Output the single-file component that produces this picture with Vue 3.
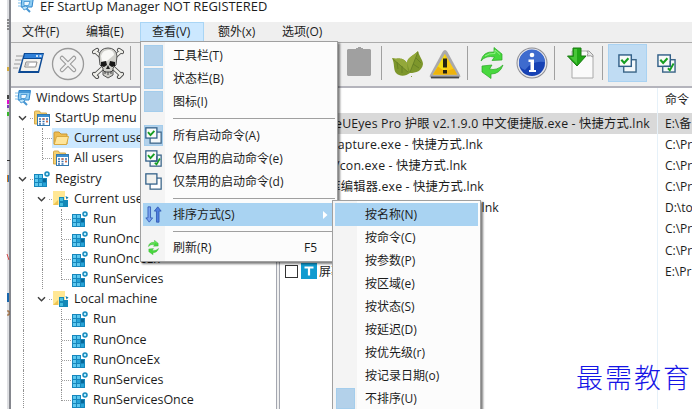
<template>
  <div class="screen">
    <svg class="desktop-strip" width="11" height="409" viewBox="0 0 11 409">
      <rect width="7" height="409" fill="#fff" />
      <rect x="7" width="2" height="409" fill="#dedfe2" />
      <rect x="9" width="2" height="409" fill="#85878e" />
      <path d="M7 20h2M7 23h2M7 26h2M7 29h2" stroke="#333" />
      <rect x="7" y="67" width="2" height="4" fill="#d7ad3d" />
      <rect x="7" y="95" width="2" height="4" fill="#444" />
      <rect x="7" y="100" width="2" height="4" fill="#e20bd0" />
      <rect x="7" y="105" width="2" height="3" fill="#7d40b8" />
      <rect x="7" y="112" width="2" height="4" fill="#38b72c" />
      <rect x="7" y="160" width="3" height="1" fill="#333" />
      <rect x="7" y="175" width="1" height="7" fill="#d27b1c" />
      <rect x="8" y="175" width="1" height="7" fill="#3474b7" />
      <path d="M7 254l2 6" stroke="#d64848" />
      <rect x="7" y="293" width="2" height="9" fill="#1766ad" />
      <path d="M7 311h2v4h-2" stroke="#96581f" fill="none" />
    </svg>

    <div class="window">
      <header class="title-bar">
        <svg class="icon16" viewBox="0 0 16 16"><use href="#i-app" /></svg>
        <span>EF StartUp Manager NOT REGISTERED</span>
      </header>

      <nav class="menu-bar">
        <span v-for="m in menus" :key="m" class="menu-name" :class="{ open: m === '查看(V)' }">{{ m }}</span>
      </nav>

      <div class="toolbar">
        <svg class="tool launch" width="32" height="32" viewBox="0 0 32 32">
          <path d="M3 9h7M2 13h7M1 17h6M0 21h5" stroke="#999" />
          <path d="M11 6h20l-5 20H5z" fill="#0d4a94" />
          <path d="M12 7h18l-1 4H11z" fill="#2f80d8" />
          <path d="M10.500 12h17.500l-3 12H7.500z" fill="#f3f2ed" />
          <path d="M13 15h11l-1.300 5H11.700z" fill="#fff" stroke="#888" />
          <path d="M13.500 16h3l-.800 3h-3z" fill="#c8c8c8" />
          <path d="M23 9h2M26.500 9h2" stroke="#fff" stroke-width="1.600" />
        </svg>
        <svg class="tool stop" width="34" height="34" viewBox="0 0 34 34">
          <circle cx="17" cy="17" r="15.500" fill="#f1f1f1" stroke="#999" stroke-width="1.300" />
          <path d="M11 11l12 12M23 11l-12 12" stroke="#999" stroke-width="4.500" stroke-linecap="round" />
          <path d="M11 11l12 12M23 11l-12 12" stroke="#f1f1f1" stroke-width="2.400" stroke-linecap="round" />
        </svg>
        <svg class="tool skull" width="32" height="32" viewBox="0 0 32 32">
          <g stroke-linecap="round">
            <path d="M4 5l24 22M28 5L4 27M2 5l3-2M27 3l3 2M2 27l3 3M27 30l3-3" stroke="#4a4a4a" stroke-width="4.200" />
            <path d="M4 5l24 22M28 5L4 27M2 5l3-2M27 3l3 2M2 27l3 3M27 30l3-3" stroke="#efefea" stroke-width="2.400" />
          </g>
          <path d="M7 9Q8 1 16 1t9 8l-1 9-3 3v7l-5 3-5-3v-7l-3-3z" fill="#cfcfca" stroke="#555" />
          <path d="M9 9q2-7 9-6 4 1 4 5l-7 6-5 1z" fill="#f8f8f6" />
          <path d="M9 15l5-1 1 4-3 2-3-1zM23 15l-5-1-1 4 3 2 3-1z" fill="#171717" />
          <path d="M16 18l-2 4h4z" fill="#222" />
          <path d="M11 23l2 2h6l2-2M13 24v3M16 25v3M19 24v3" stroke="#444" fill="none" />
        </svg>
        <i class="divider d1"></i>
        <svg class="tool clipboard" width="24" height="31" viewBox="0 0 24 31">
          <path d="M1 2h8V1h2V0h3v1h2v1h7l1 1v25l-1 1H1l-1-1V3z" fill="#a0a0a0" />
        </svg>
        <i class="divider d2"></i>
        <svg class="tool leaves" width="34" height="30" viewBox="0 0 34 30">
          <path d="M1 8c5 2 10-2 15 5 1-6 6-7 11-12 1 5 5 9 5 13-1 7-7 9-13 9-4 3-10 4-14 0-3-4-1-9-4-15z" fill="#7d962b" />
          <path d="M1 8c5 2 10-2 15 5l1 9zM27 1c-5 5-11 6-11 12l3 9z" fill="#93a83a" />
          <path d="M2 9l15 13M27 2l-8 20M6 12l1 7M11 16v7M25 8l5 5M22 14l6 4" stroke="#5f7822" stroke-width=".7" />
          <path d="M20 26l1 1" stroke="#8ba13b" />
        </svg>
        <svg class="tool warn" width="32" height="32" viewBox="0 0 32 32">
          <path d="M13.500 3q2.500-4 5 0l12.500 23q1 3-2 3H3q-3 0-2-3z" fill="#aaa9ac" />
          <path d="M2 28.500h28" stroke="#424448" stroke-width="1.800" />
          <path d="M16 5L28 25.500H4z" fill="#f9c915" />
          <path d="M16 5v20.500H4z" fill="#f4de17" />
          <path d="M4 25.500l5-8 7 5 9-3 3 6z" fill="#eeb20c" />
          <path d="M16 9.500v9M16 21v3.500" stroke="#252313" stroke-width="4" />
        </svg>
        <i class="divider d3"></i>
        <svg class="tool refresh" width="24" height="32" viewBox="0 0 24 32"><use href="#i-refresh" /></svg>
        <svg class="tool info" width="32" height="32" viewBox="0 0 32 32">
          <circle cx="16" cy="16" r="15.500" fill="#8d8d92" />
          <circle cx="16" cy="16" r="14.500" fill="#e4e6ed" />
          <circle cx="16" cy="16" r="13" fill="#1742b4" />
          <path d="M3 16a13 13 0 0 1 26-1q-13-2-20 8-6-2-6-7z" fill="#3e6bce" />
          <circle cx="16" cy="8" r="2.300" fill="#fff" />
          <path d="M12.500 12.500H18V23h2v2h-7v-2h1.500v-8h-2z" fill="#fff" />
        </svg>
        <i class="divider d4"></i>
        <svg class="tool import" width="28" height="32" viewBox="0 0 28 32">
          <path d="M5 4h15l6 6v21H5z" fill="#fafafa" stroke="#aaa" />
          <path d="M20 4q2 2 0 5 4-1 6 1V8l-4-4z" fill="#e6e6e6" stroke="#999" />
          <path d="M6 1h8v8h5l-9 10L.500 9H6z" fill="#20a716" stroke="#187a11" />
          <path d="M7 2h3v15L3 10h4z" fill="#48c639" />
        </svg>
        <i class="divider d5"></i>
        <span class="tool-active"><svg width="19" height="19" viewBox="0 0 20 20"><use href="#i-all" /></svg></span>
        <svg class="tool enabled" width="19" height="19" viewBox="0 0 20 20"><use href="#i-enabled" /></svg>
      </div>

      <main class="content">
        <section class="tree">
          <div v-for="(n, i) in nodes" :key="i" class="node">
            <span v-for="(c, k) in n.cells" :key="k" class="cell" :class="'cell-' + c">
              <svg v-if="c === 'chevron'" class="chevron" width="9" height="7" viewBox="0 0 9 7">
                <path d="M1 1.200l3.500 3.500L8 1.200" fill="none" stroke="#404040" stroke-width="1.500" />
              </svg>
            </span>
            <span class="node-body" :class="{ selected: n.selected }">
              <svg class="icon16" viewBox="0 0 16 16"><use :href="'#i-' + n.icon" /></svg>
              <span class="node-text">{{ n.text }}</span>
            </span>
          </div>
        </section>
        <div class="splitter"></div>
        <section class="list">
          <div class="list-head">
            <span class="name-col"></span>
            <span class="cmd-col">命令</span>
          </div>
          <div v-for="(r, i) in rows" :key="i" class="list-row" :class="{ selected: i === 0 }">
            <span class="name-col">
              <template v-if="r.end">
                <span class="name-right" :style="{ width: r.end + 'px' }">{{ r.name }}</span>
              </template>
              <template v-else>
                <i class="check"></i>
                <svg width="16" height="16" viewBox="0 0 16 16">
                  <rect width="16" height="16" fill="#109bd0" />
                  <path d="M3.500 4.500h9M8 4v8.500" stroke="#fff" stroke-width="2.200" />
                </svg>
                <span class="name-left">{{ r.name }}</span>
              </template>
            </span>
            <span class="cmd-col">{{ r.cmd }}</span>
          </div>
          <div class="list-rest"><span class="name-col"></span><span class="cmd-col"></span></div>
        </section>
      </main>
    </div>

    <div class="popup view-menu">
      <template v-for="(it, i) in viewItems" :key="i">
        <div v-if="it.sep" class="sep" :class="{ tall: i === 3 }"></div>
        <div v-else class="item" :class="{ hot: it.sub }">
          <span class="mark" :class="{ checked: it.checked }">
            <svg v-if="it.icon" :class="'mark-' + it.icon" width="17" height="17" viewBox="0 0 20 20"><use :href="'#i-' + it.icon" /></svg>
          </span>
          <span class="label">{{ it.text }}</span>
          <span v-if="it.key" class="key">{{ it.key }}</span>
          <svg v-if="it.sub" class="arrow" width="5" height="8" viewBox="0 0 5 8"><path d="M0 0l4.500 4L0 8z" fill="#fff" /></svg>
        </div>
      </template>
    </div>

    <div class="popup sort-menu">
      <div v-for="(t, i) in sortItems" :key="t" class="item" :class="{ hot: i === 0 }">
        <span class="mark" :class="{ checked: i === 8 }"></span>
        <span class="label">{{ t }}</span>
      </div>
    </div>

    <div class="watermark">最需教育</div>

    <svg class="defs" width="0" height="0">
      <symbol id="i-app" viewBox="0 0 16 16">
        <path d="M4 .500h11.500l-1.500 9.500H3z" fill="#8fcdf2" stroke="#2f86cc" />
        <path d="M4 2h11" stroke="#2f86cc" stroke-width="1.500" />
        <path d="M0 3h3M0 6h3M0 9h2" stroke="#7dbce6" />
        <path d="M6 4.500h6l-1.500 4H6z" fill="#eef9ff" stroke="#3b8fd0" stroke-width=".8" />
        <path d="M4 10l4-1 2 2-4 2z" fill="#bfe4f8" stroke="#3b8fd0" stroke-width=".8" />
        <path d="M8.500 11.500l3.500 3.500" stroke="#4796d2" stroke-width="2" />
      </symbol>
      <symbol id="i-group" viewBox="0 0 16 16">
        <path d="M.500 2q0-1 1-1h4l1 2h6v11H.500z" fill="#f3cf70" stroke="#d3a94c" />
        <rect x="3.500" y="4.500" width="12" height="11" fill="#fff" stroke="#3578ae" />
        <path d="M4 6h11" stroke="#3d91d1" stroke-width="2" />
        <path d="M5 9h2M8.500 9h2M12 9h2M5 11.500h2M8.500 11.500h2M12 11.500h2M5 14h2M8.500 14h2" stroke="#3770ae" stroke-width="1.600" />
        <path d="M8.500 9h2M12 11.500h2" stroke="#d76a42" stroke-width="1.600" />
      </symbol>
      <symbol id="i-folder" viewBox="0 0 16 16">
        <path d="M1 3q0-1 1-1h4l2 2h6v10H1z" fill="#eebc50" stroke="#c99735" />
        <path d="M3.500 6.500h12l-2 8H1.200z" fill="#ffe59a" stroke="#d9a93f" />
      </symbol>
      <symbol id="i-reg" viewBox="0 0 16 16">
        <path d="M0 3h9v4h4v9H0z" fill="#1687bd" />
        <path d="M1 4h3v3H1zM5 4h3v3H5zM1 8h3v3H1zM1 12h3v3H1zM5 12h3v3H5z" fill="#5dc7ee" />
        <path d="M5 8h3v3H5zM9 12h3v3H9z" fill="#27a4d7" />
        <path d="M9 8h3v3H9z" fill="#086797" />
        <circle cx="13" cy="3" r="2" fill="#b8ecff" stroke="#168abe" stroke-width="1.500" />
      </symbol>
      <symbol id="i-regfolder" viewBox="0 0 16 16">
        <path d="M0 0h12v14H0z" fill="#ffe794" />
        <path d="M0 14l5-5v5z" fill="#efc553" />
        <path d="M6 6h5v3h4v7H6z" fill="#1489b8" />
        <path d="M7 7h3v3H7zM7 12h3v3H7z" fill="#48bddd" />
        <path d="M12.500 5l3 1.500-2 2z" fill="#137ca9" />
      </symbol>
      <symbol id="i-all" viewBox="0 0 20 20">
        <rect x="6" y="6" width="13" height="13" fill="#f4f8fa" stroke="#3c6689" stroke-width="1.500" />
        <rect x="1" y="1" width="13" height="12" fill="#f9faf9" stroke="#315f88" stroke-width="1.500" />
        <path d="M3.500 6l3 3.500L11 4.500" fill="none" stroke="#169e22" stroke-width="2.200" />
      </symbol>
      <symbol id="i-enabled" viewBox="0 0 20 20">
        <use href="#i-all" />
        <path d="M11.500 15l2 2 4-7" fill="none" stroke="#169e22" stroke-width="2" />
        <path d="M14 7v6H7" fill="none" stroke="#315f88" stroke-width="1.500" />
      </symbol>
      <symbol id="i-disabled" viewBox="0 0 20 20">
        <rect x="6" y="6" width="13" height="13" fill="#fff" stroke="#3c6689" stroke-width="1.500" />
        <rect x="1" y="1" width="13" height="12" fill="#f1f1ee" stroke="#315f88" stroke-width="1.500" />
      </symbol>
      <symbol id="i-sort" viewBox="0 0 20 20">
        <path d="M3.500 1h3v13h2.500L5 19 1 14h2.500z" fill="#7ba2ee" stroke="#3059b5" />
        <path d="M13.500 19h3V6H19l-4-5-4 5h2.500z" fill="#4f7fdd" stroke="#3059b5" />
      </symbol>
      <symbol id="i-refresh" viewBox="0 0 24 32">
        <path d="M1 14Q3 4 14 5V.500l8 6.500v6l-10 .500 2.500-3.500Q6 8 1 14z" fill="#48d83e" stroke="#29a724" stroke-width=".7" />
        <path d="M23 18q-3 9-12 9v4.500L2 25v-6l10-1-2.500 4q7 2 13.500-4z" fill="#48d83e" stroke="#29a724" stroke-width=".7" />
        <path d="M5 9q4-3 10-2.500L15 3l5 4.500" fill="none" stroke="#91ef85" />
      </symbol>
    </svg>
  </div>
</template>

<script setup>
const menus = ['文件(F)', '编辑(E)', '查看(V)', '额外(x)', '选项(O)'];

const nodes = [
  { cells: [], icon: 'app', text: 'Windows StartUp' },
  { cells: ['chevron'], icon: 'group', text: 'StartUp menu' },
  { cells: ['line', 'tee'], icon: 'folder', text: 'Current user', selected: true },
  { cells: ['line', 'corner'], icon: 'group', text: 'All users' },
  { cells: ['chevron'], icon: 'reg', text: 'Registry' },
  { cells: ['line', 'chevron'], icon: 'regfolder', text: 'Current user' },
  { cells: ['line', 'line', 'tee'], icon: 'reg', text: 'Run' },
  { cells: ['line', 'line', 'tee'], icon: 'reg', text: 'RunOnce' },
  { cells: ['line', 'line', 'tee'], icon: 'reg', text: 'RunOnceEx' },
  { cells: ['line', 'line', 'corner'], icon: 'reg', text: 'RunServices' },
  { cells: ['line', 'chevron'], icon: 'regfolder', text: 'Local machine' },
  { cells: ['line', 'none', 'tee'], icon: 'reg', text: 'Run' },
  { cells: ['line', 'none', 'tee'], icon: 'reg', text: 'RunOnce' },
  { cells: ['line', 'none', 'tee'], icon: 'reg', text: 'RunOnceEx' },
  { cells: ['line', 'none', 'tee'], icon: 'reg', text: 'RunServices' },
  { cells: ['line', 'none', 'corner'], icon: 'reg', text: 'RunServicesOnce' }
];

// end: right edge of the file name inside the name column
const rows = [
  { name: 'CareUEyes Pro 护眼 v2.1.9.0 中文便捷版.exe - 快捷方式.lnk', end: 370, cmd: 'E:\\备' },
  { name: 'Capture.exe - 快捷方式.lnk', end: 203, cmd: 'C:\\Pr' },
  { name: '/con.exe - 快捷方式.lnk', end: 187, cmd: 'C:\\Pr' },
  { name: '库编辑器.exe - 快捷方式.lnk', end: 204, cmd: 'C:\\Pr' },
  { name: '快捷方式.lnk', end: 219, cmd: 'D:\\to' },
  { name: '', end: 200, cmd: 'C:\\Pr' },
  { name: '', end: 200, cmd: 'C:\\Pr' },
  { name: '屏幕', cmd: 'E:\\Pr' }
];

const viewItems = [
  { text: '工具栏(T)', checked: true },
  { text: '状态栏(B)', checked: true },
  { text: '图标(I)', checked: true },
  { sep: true },
  { text: '所有启动命令(A)', checked: true, icon: 'all' },
  { text: '仅启用的启动命令(e)', icon: 'enabled' },
  { text: '仅禁用的启动命令(d)', icon: 'disabled' },
  { sep: true },
  { text: '排序方式(S)', icon: 'sort', sub: true },
  { sep: true },
  { text: '刷新(R)', icon: 'refresh', key: 'F5' }
];

const sortItems = [
  '按名称(N)', '按命令(C)', '按参数(P)', '按区域(e)', '按状态(S)',
  '按延迟(D)', '按优先级(r)', '按记录日期(o)', '不排序(U)'
];
</script>

<style>
body { background: #fff; overflow: hidden; }
</style>

<style scoped>
.screen {
  position: relative;
  display: flex;
  width: 698px;
  height: 409px;
  overflow: hidden;
  background: #fff;
  color: #1c1c1c;
  font-family: "Open Sans", "Noto Sans CJK SC", sans-serif;
  font-size: 12px;
  white-space: nowrap;
}
.desktop-strip { flex: none; }
.window { width: 681px; overflow: hidden; display: flex; flex-direction: column; }
.icon16 { width: 16px; height: 16px; flex: none; }
.title-bar {
  height: 22px;
  display: flex;
  align-items: flex-start;
  gap: 6px;
  padding-left: 7px;
  box-sizing: border-box;
  line-height: 13px;
  font-size: 12.9px;
}
.title-bar .icon16 { margin-top: -3px; }
.menu-bar {
  height: 20px;
  flex: none;
  display: grid;
  grid-template-columns: 64px 65px 64px 66px 66px;
  background: #efefef;
}
.menu-name { padding-left: 11px; line-height: 20px; }
.menu-name:nth-child(3) { padding-left: 12px; }
.menu-name:nth-child(4) { padding-left: 14px; }
.menu-name:nth-child(5) { padding-left: 12px; }
.menu-name.open { background: #cce8ff; box-shadow: inset 0 0 0 1px #a9d5f5; }

/* Toolbar */
.toolbar {
  height: 46px;
  flex: none;
  box-sizing: border-box;
  display: flex;
  align-items: flex-start;
  background: #efefef;
  border-top: 1px solid #acacac;
  border-bottom: 2px solid #b4b4bc;
}
.tool { flex: none; margin-top: 4px; }
.launch { margin-left: 2px; }
.stop { margin: 4px 0 0 6px; }
.skull { margin-left: 7px; }
.divider { flex: none; width: 1px; height: 34px; margin-top: 3px; background: #a0a0a0; }
.d1 { margin-left: 6px; }
.clipboard { margin-left: 216px; }
.d2 { margin-left: 10px; }
.leaves { margin: 7px 0 0 9px; }
.warn { margin: 6px 0 0 4px; }
.d3 { margin-left: 6px; }
.refresh { margin-left: 12px; }
.info { margin-left: 12px; }
.d4 { margin-left: 6px; }
.import { margin-left: 12px; }
.d5 { margin-left: 7px; }
.tool-active {
  flex: none;
  width: 39px;
  height: 38px;
  margin: 1px 0 0 5px;
  display: flex;
  align-items: center;
  justify-content: center;
  background: #c0dcf3;
  box-shadow: inset 0 0 0 1px #a9d2f2;
}
.enabled { margin: 11px 0 0 10px; }

.content { flex: 1; display: flex; min-height: 0; }

/* Tree */
.tree { width: 265px; flex: none; overflow: hidden; padding-left: 3px; box-sizing: border-box; font-size: 12.5px; }
.node { height: 20.13px; display: flex; }
.cell { position: relative; width: 19px; flex: none; }
.cell-line::before, .cell-tee::before, .cell-corner::before {
  content: "";
  position: absolute;
  left: 9px;
  top: 0;
  bottom: 0;
  border-left: 1px dotted #909090;
}
.cell-corner::before { bottom: 9px; }
.cell-tee::after, .cell-corner::after, .cell-chevron::after {
  content: "";
  position: absolute;
  left: 10px;
  right: 0;
  top: 10px;
  border-top: 1px dotted #a0a0a0;
}
.cell-chevron::after { left: 16px; }
.chevron { display: block; margin: 7px 0 0 4px; }
.node-body { flex: 1; display: flex; align-items: center; gap: 5px; padding-left: 1px; }
.node-body.selected { background: #cce8ff; }
.node-text { line-height: 20px; }
.splitter { width: 4px; flex: none; box-sizing: border-box; background: #f0f0f0; border-left: 1px solid #a4a7b0; border-right: 1px solid #a4a7b0; }

/* Startup list */
.list { flex: 1; display: flex; flex-direction: column; min-width: 0; overflow: hidden; }
.list-head, .list-row, .list-rest { display: flex; }
.list-head { height: 25px; flex: none; line-height: 24px; }
.list-row { height: 21.1px; flex: none; line-height: 21px; }
.list-row.selected { background: #d9d9d9; }
.list-rest { flex: 1; }
.name-col { width: 378px; flex: none; display: flex; align-items: center; box-sizing: border-box; border-right: 1px solid #e6f1f9; }
.name-right { display: flex; justify-content: flex-end; flex: none; font-size: 12.3px; letter-spacing: .17px; }
.name-left { margin-left: 2px; }
.cmd-col { padding-left: 7px; }
.check { width: 11px; height: 11px; margin: 0 3px 0 5px; border: 1px solid #333; background: #fff; }

/* Popup menus */
.popup {
  position: absolute;
  box-sizing: border-box;
  padding: 2px;
  border: 1px solid #a0a0a0;
  background: linear-gradient(to right, #f4f4f4 24px, #fcfcfc 24px);
  box-shadow: 2px 2px 2px rgba(0, 0, 0, .5);
}
.view-menu { left: 140px; top: 41px; width: 198px; height: 221px; }
.sort-menu { left: 332px; top: 200px; width: 149px; height: 220px; }
.item { height: 23px; display: flex; align-items: center; }
.item.hot { background: #a9d3f2; }
.mark { width: 19px; height: 21px; margin-left: 1px; flex: none; display: flex; align-items: center; justify-content: center; }
.mark.checked { background: #b3d1ea; box-shadow: inset 0 0 0 1px #a4cdec; }
.mark-refresh { width: 15px; height: 15px; }
.label { margin-left: 10px; line-height: 23px; }
.key { margin-left: auto; margin-right: 18px; }
.arrow { margin-left: auto; margin-right: 7px; }
.sep { height: 10px; box-sizing: border-box; padding-top: 5px; }
.sep.tall { height: 11px; }
.sep::before { content: ""; display: block; height: 1px; margin-left: 30px; background: #a0a0a0; }

.watermark {
  position: absolute;
  left: 576px;
  top: 357px;
  font-family: "Noto Sans CJK SC", sans-serif;
  font-size: 27px;
  font-weight: 300;
  letter-spacing: 2px;
  line-height: 40px;
  color: #1414e6;
}
.defs { position: absolute; }
</style>
